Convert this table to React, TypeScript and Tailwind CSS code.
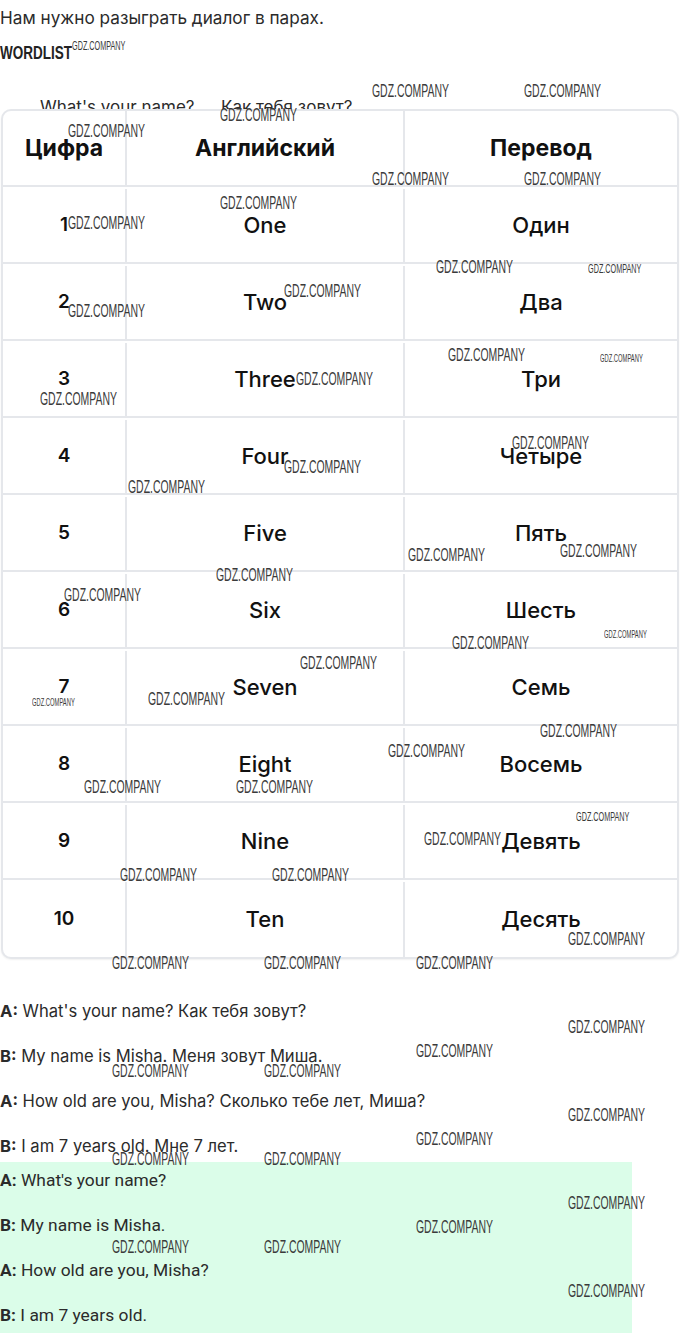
const rows = [
  ["1", "One", "Один"],
  ["2", "Two", "Два"],
  ["3", "Three", "Три"],
  ["4", "Four", "Четыре"],
  ["5", "Five", "Пять"],
  ["6", "Six", "Шесть"],
  ["7", "Seven", "Семь"],
  ["8", "Eight", "Восемь"],
  ["9", "Nine", "Девять"],
  ["10", "Ten", "Десять"],
];

// watermark marks: x, center y, size
const marks: [number, number, "n" | "s" | "t"][] = [
  [72, 46, "s"], [372, 91, "n"], [524, 91, "n"], [220, 115, "n"], [68, 131, "n"],
  [372, 179, "n"], [524, 179, "n"], [220, 203, "n"], [68, 223, "n"], [436, 267, "n"],
  [588, 269, "s"], [284, 291, "n"], [68, 311, "n"], [448, 355, "n"], [600, 359, "t"],
  [296, 379, "n"], [40, 399, "n"], [512, 443, "n"], [284, 467, "n"], [128, 487, "n"],
  [408, 555, "n"], [560, 551, "n"], [216, 575, "n"], [64, 595, "n"], [452, 643, "n"],
  [604, 635, "t"], [300, 663, "n"], [148, 699, "n"], [32, 703, "t"], [540, 731, "n"],
  [388, 751, "n"], [84, 787, "n"], [236, 787, "n"], [576, 817, "s"], [424, 839, "n"],
  [120, 875, "n"], [272, 875, "n"], [568, 939, "n"], [112, 963, "n"], [264, 963, "n"],
  [416, 963, "n"], [568, 1027, "n"], [416, 1051, "n"], [112, 1071, "n"], [264, 1071, "n"],
  [568, 1115, "n"], [416, 1139, "n"], [112, 1159, "n"], [264, 1159, "n"], [568, 1203, "n"],
  [416, 1227, "n"], [112, 1247, "n"], [264, 1247, "n"], [568, 1291, "n"],
];

const sizeClass = {
  n: "text-[18px] leading-[18px] -mt-[9px]",
  s: "text-[12.5px] leading-[12px] -mt-[6px]",
  t: "text-[10px] leading-[10px] -mt-[5px]",
};

function Watermark({ x, y, size }: { x: number; y: number; size: "n" | "s" | "t" }) {
  return (
    <div
      className={`absolute whitespace-nowrap text-[#3a3a3a] origin-left scale-x-[0.58] font-['Liberation_Sans',sans-serif] pointer-events-none ${sizeClass[size]}`}
      style={{ left: x, top: y }}
    >
      GDZ.COMPANY
    </div>
  );
}

function Line({ who, text, green }: { who: string; text: string; green?: boolean }) {
  return (
    <p className={green ? "text-[17.4px] leading-6" : "text-[16.6px] leading-6"}>
      <span className="font-bold">{who}:</span> {text}
    </p>
  );
}

export default function App() {
  return (
    <div className="relative min-h-[1333px] overflow-hidden bg-white font-['Inter',sans-serif] text-[#2b2b2b]">
      <p className="pt-[6px] text-[17.2px] leading-6">Нам нужно разыграть диалог в парах.</p>
      <p className="mt-[11px] font-['Liberation_Sans',sans-serif] text-[18px] font-bold leading-6 text-[#222] origin-left scale-x-75">
        WORDLIST
      </p>

      <div className="mt-[30px] flex h-[24px] pl-[40px] text-[17px] leading-6">
        <span className="w-[181px]">What's your name?</span>
        <span>Как тебя зовут?</span>
      </div>

      <div className="relative mx-[1px] -mt-[10px] overflow-hidden rounded-[10px] border-2 border-[#e5e7eb] bg-white text-[#111] shadow-[0_1px_2px_rgba(0,0,0,0.06)]">
        <div className="grid h-[76px] grid-cols-[124px_278px_1fr] border-b-2 border-[#e5e7eb] text-[23px] font-bold">
          <div className="flex items-center justify-center border-r-2 border-[#e5e7eb]">Цифра</div>
          <div className="flex items-center justify-center border-r-2 border-[#e5e7eb]">Английский</div>
          <div className="flex items-center justify-center">Перевод</div>
        </div>
        {rows.map(([n, en, ru], i) => (
          <div
            key={n}
            className={`grid h-[77px] grid-cols-[124px_278px_1fr] pt-[2px] ${i < rows.length - 1 ? "border-b-2 border-[#e5e7eb]" : ""}`}
          >
            <div className="flex items-center justify-center border-r-2 border-[#e5e7eb] text-[19px] font-semibold">{n}</div>
            <div className="flex items-center justify-center border-r-2 border-[#e5e7eb] text-[22px] font-medium">{en}</div>
            <div className="flex items-center justify-center text-[22px] font-medium">{ru}</div>
          </div>
        ))}
      </div>

      <div className="mt-[40px] flex flex-col gap-[21px]">
        <Line who="A" text="What's your name? Как тебя зовут?" />
        <Line who="B" text="My name is Misha. Меня зовут Миша." />
        <Line who="A" text="How old are you, Misha? Сколько тебе лет, Миша?" />
        <Line who="B" text="I am 7 years old. Мне 7 лет." />
      </div>

      <div className="mt-[4px] flex w-[632px] flex-col gap-[21px] bg-[#dbfde9] pt-[6px] pb-[10px] font-['Roboto',sans-serif]">
        <Line green who="A" text="What's your name?" />
        <Line green who="B" text="My name is Misha." />
        <Line green who="A" text="How old are you, Misha?" />
        <Line green who="B" text="I am 7 years old." />
      </div>

      {marks.map(([x, y, s], i) => (
        <Watermark key={i} x={x} y={y} size={s} />
      ))}
    </div>
  );
}
